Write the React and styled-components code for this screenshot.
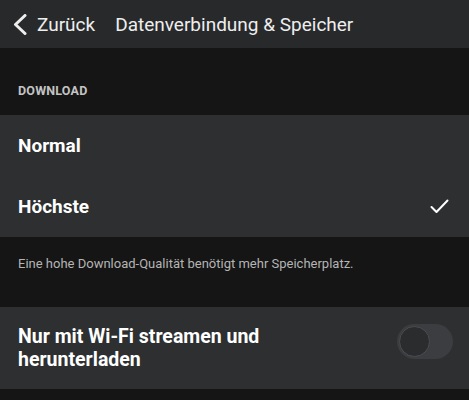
import React from "react";
import styled, { createGlobalStyle } from "styled-components";

const Global = createGlobalStyle`
  body {
    margin: 0;
    background: #151515;
    font-family: Roboto, "Noto Sans", sans-serif;
    color: #fff;
  }
`;

const Header = styled.div`
  height: 48px;
  background: #28292b;
  display: flex;
  align-items: center;
  padding-left: 13px;
`;

const Back = styled.div`
  display: flex;
  align-items: center;
  gap: 10px;
  font-size: 19px;
  color: #eee;
`;

const Title = styled.div`
  margin-left: 20px;
  font-size: 19px;
  color: #eee;
`;

const SectionLabel = styled.div`
  height: 67px;
  box-sizing: border-box;
  padding: 35px 18px 0;
  font-size: 12.5px;
  font-weight: 700;
  color: #c4c4c4;
  letter-spacing: 0.2px;
`;

const Panel = styled.div`
  background: #2d2f31;
`;

const OptionRow = styled.div`
  height: 61px;
  display: flex;
  align-items: center;
  justify-content: space-between;
  padding: 0 20px 0 18px;
  font-size: 19px;
  font-weight: 700;
`;

const Note = styled.div`
  height: 70px;
  box-sizing: border-box;
  padding: 19px 18px 0;
  font-size: 13px;
  color: #b4b4b4;
`;

const ToggleRow = styled.div`
  display: flex;
  align-items: flex-start;
  justify-content: space-between;
  padding: 18px 16px 18px 18px;
`;

const ToggleText = styled.div`
  font-size: 19.5px;
  font-weight: 700;
  line-height: 23px;
  width: 280px;
`;

const Track = styled.div`
  width: 56px;
  height: 35px;
  border-radius: 18px;
  background: #3b3d40;
  display: flex;
  align-items: center;
  padding: 0 2px;
  box-sizing: border-box;
  margin-top: -1px;
`;

const Knob = styled.div`
  width: 31px;
  height: 31px;
  border-radius: 50%;
  background: #2a2c2e;
  box-sizing: border-box;
  border: 1.5px solid #4a4c4f;
`;

const Check = () => (
  <svg width="19" height="15" viewBox="0 0 19 15">
    <polyline points="1.5,8 6.5,13 17.5,1.5" fill="none" stroke="#fff" strokeWidth="2" strokeLinecap="round" strokeLinejoin="round" />
  </svg>
);

const Chevron = () => (
  <svg width="14" height="21" viewBox="0 0 14 21">
    <polyline points="12,1.5 2.5,10.5 12,19.5" fill="none" stroke="#eee" strokeWidth="3" strokeLinecap="round" strokeLinejoin="round" />
  </svg>
);

export default function App() {
  return (
    <>
      <Global />
      <Header>
        <Back>
          <Chevron />
          Zurück
        </Back>
        <Title>Datenverbindung &amp; Speicher</Title>
      </Header>
      <SectionLabel>DOWNLOAD</SectionLabel>
      <Panel>
        <OptionRow>Normal</OptionRow>
        <OptionRow>
          Höchste
          <Check />
        </OptionRow>
      </Panel>
      <Note>Eine hohe Download-Qualität benötigt mehr Speicherplatz.</Note>
      <Panel>
        <ToggleRow>
          <ToggleText>Nur mit Wi-Fi streamen und herunterladen</ToggleText>
          <Track>
            <Knob />
          </Track>
        </ToggleRow>
      </Panel>
    </>
  );
}
